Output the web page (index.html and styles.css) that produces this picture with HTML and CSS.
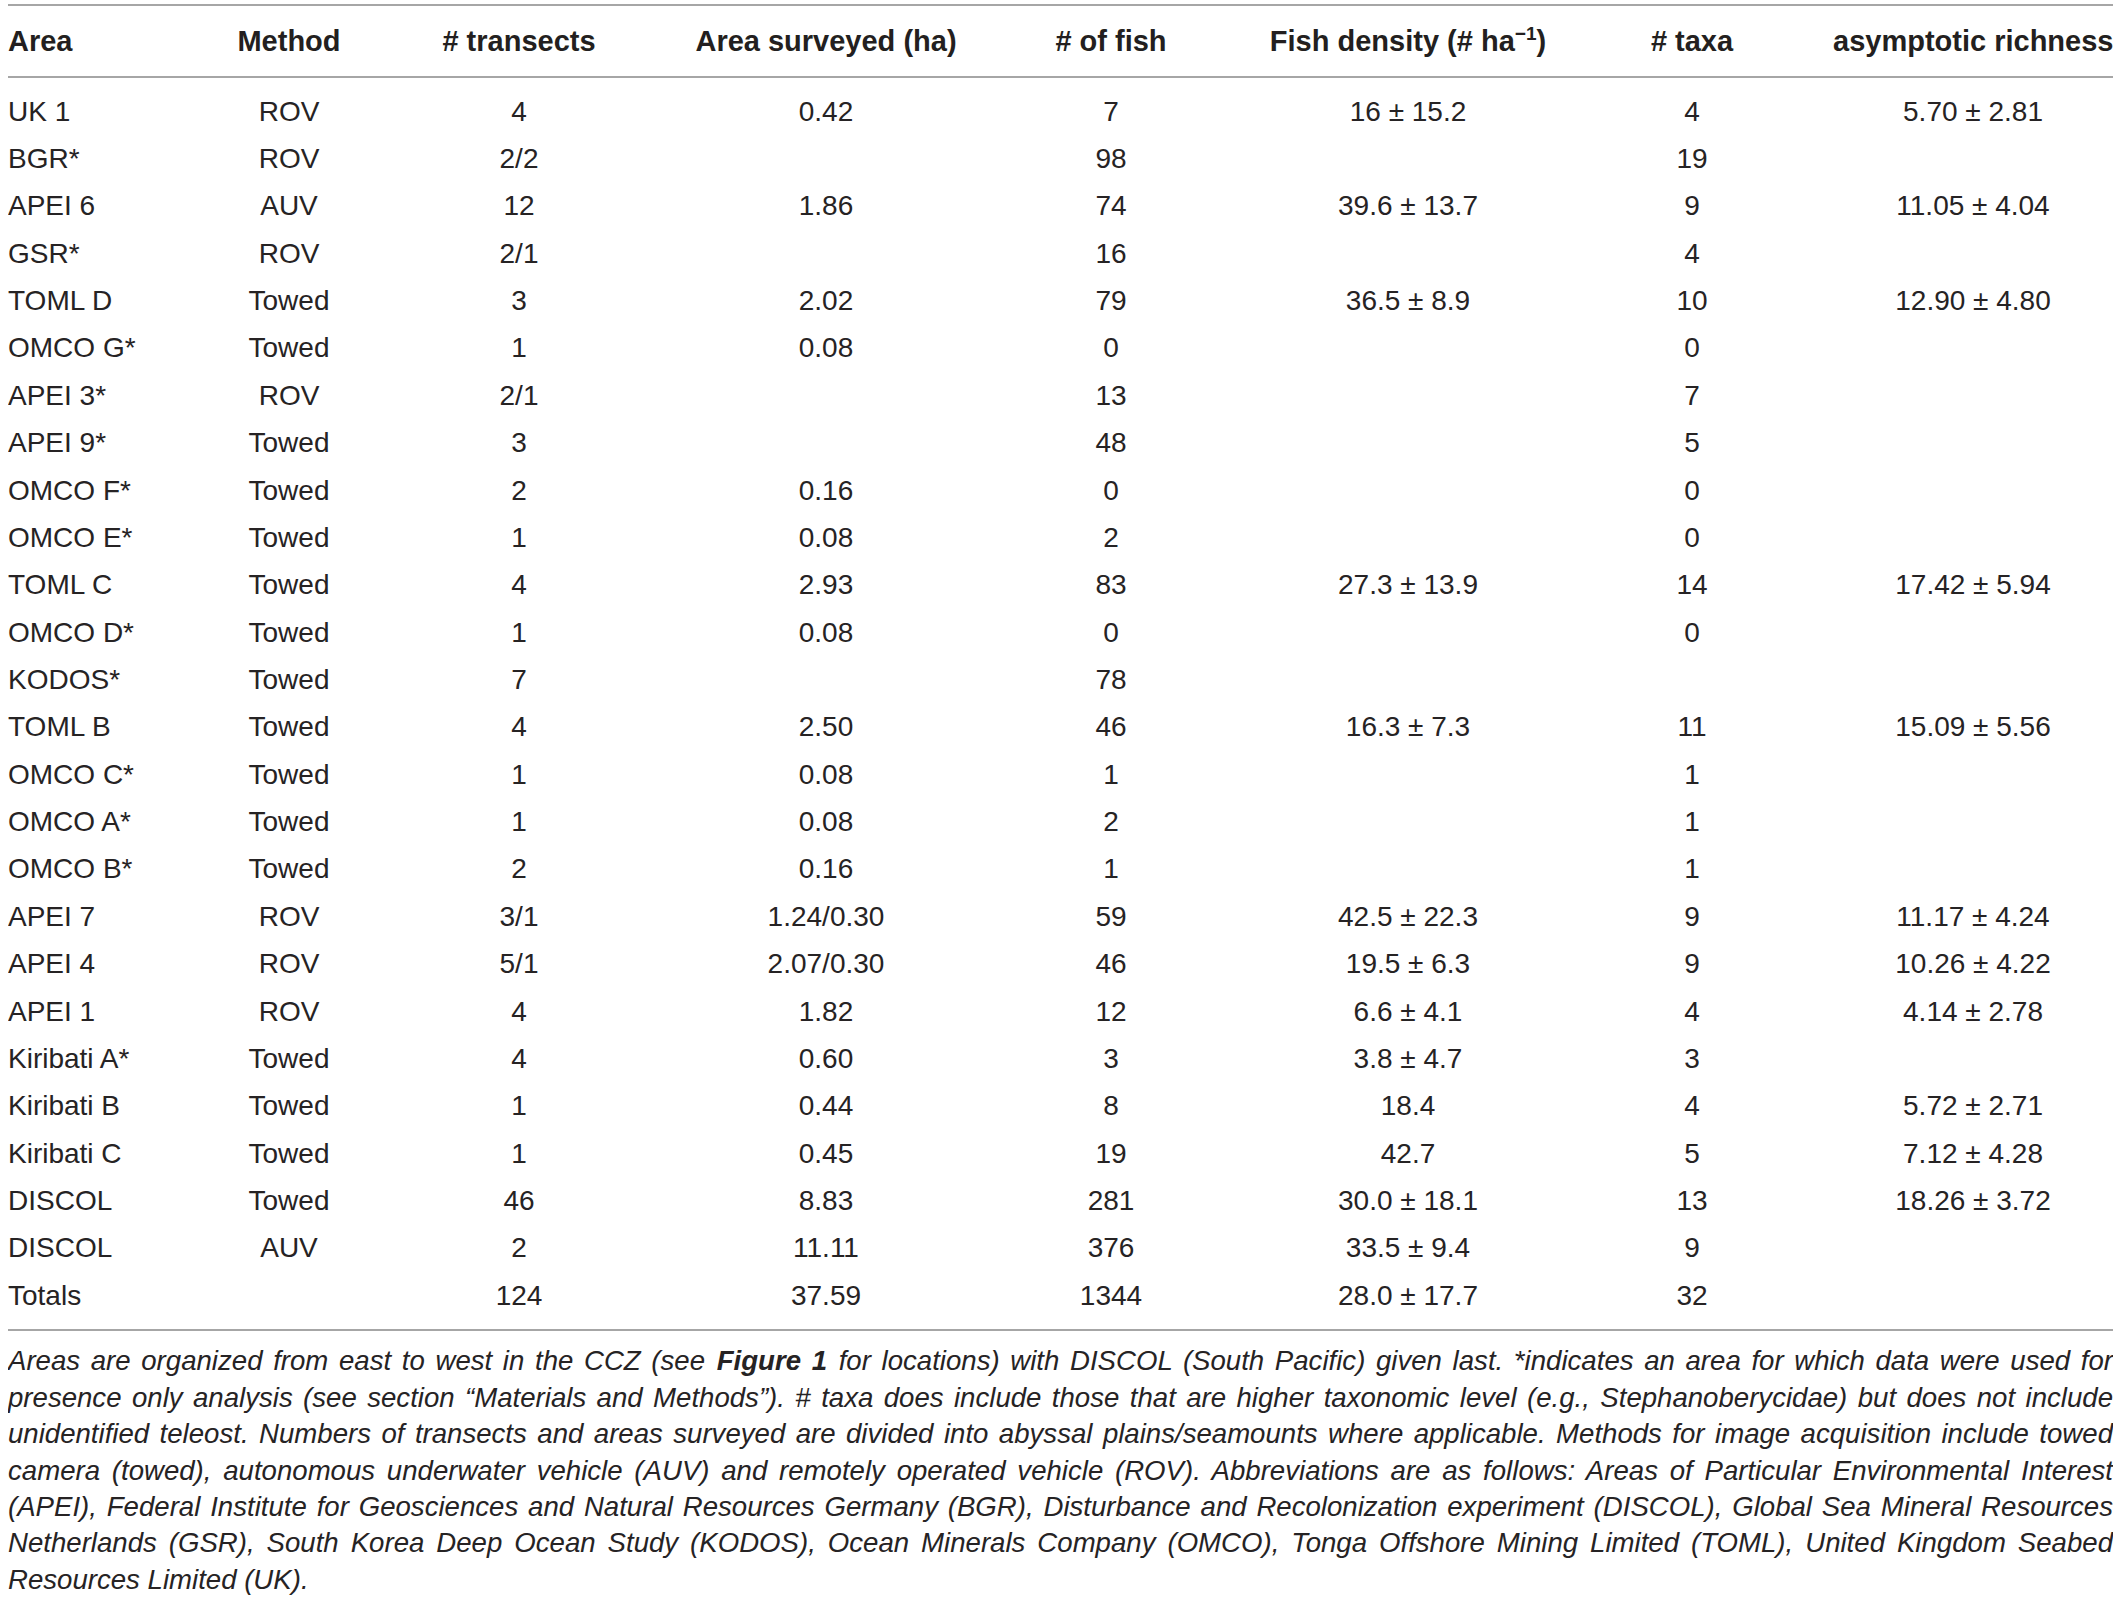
FILE: index.html
```html
<!DOCTYPE html>
<html lang="en">
<head>
<meta charset="utf-8">
<title>Table</title>
<link rel="stylesheet" href="styles.css">
</head>
<body>
<div class="table">
  <div class="row head">
    <div class="cell left">Area</div>
    <div class="cell">Method</div>
    <div class="cell"># transects</div>
    <div class="cell">Area surveyed (ha)</div>
    <div class="cell"># of fish</div>
    <div class="cell">Fish density (# ha<sup>&minus;1</sup>)</div>
    <div class="cell"># taxa</div>
    <div class="cell">asymptotic richness</div>
  </div>
  <div class="body">
    <div class="row"><div class="cell left">UK 1</div><div class="cell">ROV</div><div class="cell">4</div><div class="cell">0.42</div><div class="cell">7</div><div class="cell">16 &plusmn; 15.2</div><div class="cell">4</div><div class="cell">5.70 &plusmn; 2.81</div></div>
    <div class="row"><div class="cell left">BGR*</div><div class="cell">ROV</div><div class="cell">2/2</div><div class="cell"></div><div class="cell">98</div><div class="cell"></div><div class="cell">19</div><div class="cell"></div></div>
    <div class="row"><div class="cell left">APEI 6</div><div class="cell">AUV</div><div class="cell">12</div><div class="cell">1.86</div><div class="cell">74</div><div class="cell">39.6 &plusmn; 13.7</div><div class="cell">9</div><div class="cell">11.05 &plusmn; 4.04</div></div>
    <div class="row"><div class="cell left">GSR*</div><div class="cell">ROV</div><div class="cell">2/1</div><div class="cell"></div><div class="cell">16</div><div class="cell"></div><div class="cell">4</div><div class="cell"></div></div>
    <div class="row"><div class="cell left">TOML D</div><div class="cell">Towed</div><div class="cell">3</div><div class="cell">2.02</div><div class="cell">79</div><div class="cell">36.5 &plusmn; 8.9</div><div class="cell">10</div><div class="cell">12.90 &plusmn; 4.80</div></div>
    <div class="row"><div class="cell left">OMCO G*</div><div class="cell">Towed</div><div class="cell">1</div><div class="cell">0.08</div><div class="cell">0</div><div class="cell"></div><div class="cell">0</div><div class="cell"></div></div>
    <div class="row"><div class="cell left">APEI 3*</div><div class="cell">ROV</div><div class="cell">2/1</div><div class="cell"></div><div class="cell">13</div><div class="cell"></div><div class="cell">7</div><div class="cell"></div></div>
    <div class="row"><div class="cell left">APEI 9*</div><div class="cell">Towed</div><div class="cell">3</div><div class="cell"></div><div class="cell">48</div><div class="cell"></div><div class="cell">5</div><div class="cell"></div></div>
    <div class="row"><div class="cell left">OMCO F*</div><div class="cell">Towed</div><div class="cell">2</div><div class="cell">0.16</div><div class="cell">0</div><div class="cell"></div><div class="cell">0</div><div class="cell"></div></div>
    <div class="row"><div class="cell left">OMCO E*</div><div class="cell">Towed</div><div class="cell">1</div><div class="cell">0.08</div><div class="cell">2</div><div class="cell"></div><div class="cell">0</div><div class="cell"></div></div>
    <div class="row"><div class="cell left">TOML C</div><div class="cell">Towed</div><div class="cell">4</div><div class="cell">2.93</div><div class="cell">83</div><div class="cell">27.3 &plusmn; 13.9</div><div class="cell">14</div><div class="cell">17.42 &plusmn; 5.94</div></div>
    <div class="row"><div class="cell left">OMCO D*</div><div class="cell">Towed</div><div class="cell">1</div><div class="cell">0.08</div><div class="cell">0</div><div class="cell"></div><div class="cell">0</div><div class="cell"></div></div>
    <div class="row"><div class="cell left">KODOS*</div><div class="cell">Towed</div><div class="cell">7</div><div class="cell"></div><div class="cell">78</div><div class="cell"></div><div class="cell"></div><div class="cell"></div></div>
    <div class="row"><div class="cell left">TOML B</div><div class="cell">Towed</div><div class="cell">4</div><div class="cell">2.50</div><div class="cell">46</div><div class="cell">16.3 &plusmn; 7.3</div><div class="cell">11</div><div class="cell">15.09 &plusmn; 5.56</div></div>
    <div class="row"><div class="cell left">OMCO C*</div><div class="cell">Towed</div><div class="cell">1</div><div class="cell">0.08</div><div class="cell">1</div><div class="cell"></div><div class="cell">1</div><div class="cell"></div></div>
    <div class="row"><div class="cell left">OMCO A*</div><div class="cell">Towed</div><div class="cell">1</div><div class="cell">0.08</div><div class="cell">2</div><div class="cell"></div><div class="cell">1</div><div class="cell"></div></div>
    <div class="row"><div class="cell left">OMCO B*</div><div class="cell">Towed</div><div class="cell">2</div><div class="cell">0.16</div><div class="cell">1</div><div class="cell"></div><div class="cell">1</div><div class="cell"></div></div>
    <div class="row"><div class="cell left">APEI 7</div><div class="cell">ROV</div><div class="cell">3/1</div><div class="cell">1.24/0.30</div><div class="cell">59</div><div class="cell">42.5 &plusmn; 22.3</div><div class="cell">9</div><div class="cell">11.17 &plusmn; 4.24</div></div>
    <div class="row"><div class="cell left">APEI 4</div><div class="cell">ROV</div><div class="cell">5/1</div><div class="cell">2.07/0.30</div><div class="cell">46</div><div class="cell">19.5 &plusmn; 6.3</div><div class="cell">9</div><div class="cell">10.26 &plusmn; 4.22</div></div>
    <div class="row"><div class="cell left">APEI 1</div><div class="cell">ROV</div><div class="cell">4</div><div class="cell">1.82</div><div class="cell">12</div><div class="cell">6.6 &plusmn; 4.1</div><div class="cell">4</div><div class="cell">4.14 &plusmn; 2.78</div></div>
    <div class="row"><div class="cell left">Kiribati A*</div><div class="cell">Towed</div><div class="cell">4</div><div class="cell">0.60</div><div class="cell">3</div><div class="cell">3.8 &plusmn; 4.7</div><div class="cell">3</div><div class="cell"></div></div>
    <div class="row"><div class="cell left">Kiribati B</div><div class="cell">Towed</div><div class="cell">1</div><div class="cell">0.44</div><div class="cell">8</div><div class="cell">18.4</div><div class="cell">4</div><div class="cell">5.72 &plusmn; 2.71</div></div>
    <div class="row"><div class="cell left">Kiribati C</div><div class="cell">Towed</div><div class="cell">1</div><div class="cell">0.45</div><div class="cell">19</div><div class="cell">42.7</div><div class="cell">5</div><div class="cell">7.12 &plusmn; 4.28</div></div>
    <div class="row"><div class="cell left">DISCOL</div><div class="cell">Towed</div><div class="cell">46</div><div class="cell">8.83</div><div class="cell">281</div><div class="cell">30.0 &plusmn; 18.1</div><div class="cell">13</div><div class="cell">18.26 &plusmn; 3.72</div></div>
    <div class="row"><div class="cell left">DISCOL</div><div class="cell">AUV</div><div class="cell">2</div><div class="cell">11.11</div><div class="cell">376</div><div class="cell">33.5 &plusmn; 9.4</div><div class="cell">9</div><div class="cell"></div></div>
    <div class="row"><div class="cell left">Totals</div><div class="cell"></div><div class="cell">124</div><div class="cell">37.59</div><div class="cell">1344</div><div class="cell">28.0 &plusmn; 17.7</div><div class="cell">32</div><div class="cell"></div></div>
  </div>
</div>
<p class="caption">Areas are organized from east to west in the CCZ (see <b>Figure 1</b> for locations) with DISCOL (South Pacific) given last. *indicates an area for which data were used for presence only analysis (see section “Materials and Methods”). # taxa does include those that are higher taxonomic level (e.g., Stephanoberycidae) but does not include unidentified teleost. Numbers of transects and areas surveyed are divided into abyssal plains/seamounts where applicable. Methods for image acquisition include towed camera (towed), autonomous underwater vehicle (AUV) and remotely operated vehicle (ROV). Abbreviations are as follows: Areas of Particular Environmental Interest (APEI), Federal Institute for Geosciences and Natural Resources Germany (BGR), Disturbance and Recolonization experiment (DISCOL), Global Sea Mineral Resources Netherlands (GSR), South Korea Deep Ocean Study (KODOS), Ocean Minerals Company (OMCO), Tonga Offshore Mining Limited (TOML), United Kingdom Seabed Resources Limited (UK).</p>
</body>
</html>
```

FILE: styles.css
```css
html, body {
  background: #ffffff;
}
body {
  margin: 4px 8px 0 8px;
  font-family: "Liberation Sans", Arial, sans-serif;
  color: #262324;
}
.table {
  width: 2105px;
}
.row {
  display: grid;
  grid-template-columns: 227px 108px 352px 262px 308px 286px 282px 280px;
  align-items: center;
  height: 47.36px;
  font-size: 28px;
  line-height: 32px;
}
.cell {
  text-align: center;
  white-space: nowrap;
}
.cell.left {
  text-align: left;
}
.head {
  height: 70px;
  border-top: 2px solid #a6a6a6;
  border-bottom: 2px solid #a6a6a6;
  font-size: 29px;
  font-weight: bold;
  color: #231f20;
}
.head sup {
  font-size: 19px;
  line-height: 0;
  vertical-align: 11px;
}
.body {
  padding: 10px 0 10px 0;
  border-bottom: 2px solid #a6a6a6;
}
.caption {
  margin: 12px 0 0 0;
  font-size: 27.6px;
  line-height: 36.4px;
  font-style: italic;
  text-align: justify;
}
.caption b {
  font-weight: bold;
  padding: 0 1px;
}
```
